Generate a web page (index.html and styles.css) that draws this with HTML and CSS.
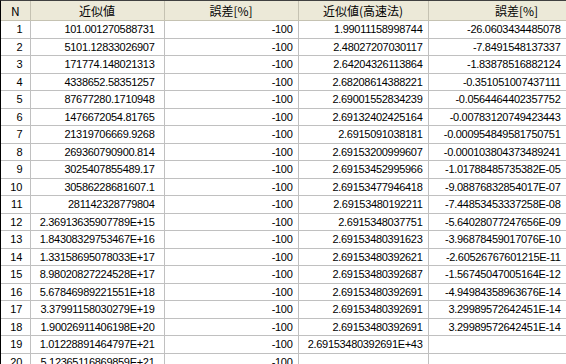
FILE: index.html
```html
<!DOCTYPE html>
<html lang="ja">
<head>
<meta charset="utf-8">
<title>近似値</title>
<link rel="stylesheet" href="styles.css">
</head>
<body>
<div class="grid">
<table class="sheet">
<colgroup>
<col class="c-n"><col class="c-a"><col class="c-b"><col class="c-c"><col class="c-d">
</colgroup>
<thead>
<tr><th>N</th><th>近似値</th><th>誤差[%]</th><th>近似値(高速法)</th><th>誤差[%]</th></tr>
</thead>
<tbody>
<tr><td>1</td><td class="wide">101.001270588731</td><td>-100</td><td>1.99011158998744</td><td>-26.0603434485078</td></tr>
<tr><td>2</td><td class="wide">5101.12833026907</td><td>-100</td><td>2.48027207030117</td><td>-7.8491548137337</td></tr>
<tr><td>3</td><td class="wide">171774.148021313</td><td>-100</td><td>2.64204326113864</td><td>-1.83878516882124</td></tr>
<tr><td>4</td><td class="wide">4338652.58351257</td><td>-100</td><td>2.68208614388221</td><td>-0.351051007437111</td></tr>
<tr><td>5</td><td class="wide">87677280.1710948</td><td>-100</td><td>2.69001552834239</td><td>-0.0564464402357752</td></tr>
<tr><td>6</td><td class="wide">1476672054.81765</td><td>-100</td><td>2.69132402425164</td><td>-0.00783120749423443</td></tr>
<tr><td>7</td><td class="wide">21319706669.9268</td><td>-100</td><td>2.6915091038181</td><td>-0.000954849581750751</td></tr>
<tr><td>8</td><td class="wide">269360790900.814</td><td>-100</td><td>2.69153200999607</td><td>-0.000103804373489241</td></tr>
<tr><td>9</td><td class="wide">3025407855489.17</td><td>-100</td><td>2.69153452995966</td><td>-1.01788485735382E-05</td></tr>
<tr><td>10</td><td class="wide">30586228681607.1</td><td>-100</td><td>2.69153477946418</td><td>-9.08876832854017E-07</td></tr>
<tr><td>11</td><td class="wide">281142328779804</td><td>-100</td><td>2.69153480192211</td><td>-7.44853453337258E-08</td></tr>
<tr><td>12</td><td class="wide">2.36913635907789E+15</td><td>-100</td><td>2.6915348037751</td><td>-5.64028077247656E-09</td></tr>
<tr><td>13</td><td class="wide">1.84308329753467E+16</td><td>-100</td><td>2.69153480391623</td><td>-3.96878459017076E-10</td></tr>
<tr><td>14</td><td class="wide">1.33158695078033E+17</td><td>-100</td><td>2.69153480392621</td><td>-2.60526767601215E-11</td></tr>
<tr><td>15</td><td class="wide">8.98020827224528E+17</td><td>-100</td><td>2.69153480392687</td><td>-1.56745047005164E-12</td></tr>
<tr><td>16</td><td class="wide">5.67846989221551E+18</td><td>-100</td><td>2.69153480392691</td><td>-4.94984358963676E-14</td></tr>
<tr><td>17</td><td class="wide">3.37991158030279E+19</td><td>-100</td><td>2.69153480392691</td><td>3.29989572642451E-14</td></tr>
<tr><td>18</td><td class="wide">1.90026911406198E+20</td><td>-100</td><td>2.69153480392691</td><td>3.29989572642451E-14</td></tr>
<tr><td>19</td><td class="wide">1.01228891464797E+21</td><td>-100</td><td>2.69153480392691E+43</td><td></td></tr>
<tr><td>20</td><td class="wide">5.12365116869859E+21</td><td>-100</td><td></td><td></td></tr>
</tbody>
</table>
</div>
</body>
</html>
```
FILE: styles.css
```css
html, body {
  margin: 0;
  padding: 0;
  background: #ffffff;
}
.grid {
  width: 566px;
  height: 364px;
  overflow: hidden;
  border-left: 1px solid #000000;
  border-top: 1px solid #404040;
  box-sizing: border-box;
}
.sheet {
  border-collapse: collapse;
  table-layout: fixed;
  width: 604px;
  font-family: "Liberation Sans", "Noto Sans CJK JP", sans-serif;
  font-size: 11px;
  color: #000000;
}
.c-n { width: 29px; }
.c-a { width: 134px; }
.c-b { width: 134px; }
.c-c { width: 130px; }
.c-d { width: 177px; }
.sheet th {
  height: 19px;
  padding: 0;
  background: #ece9d8;
  font-weight: normal;
  font-size: 12px;
  font-family: "Noto Sans CJK JP", "Liberation Sans", sans-serif;
  text-align: center;
  border-right: 1px solid #c5c2b2;
  border-bottom: 1px solid #c5c2b2;
  white-space: nowrap;
  overflow: hidden;
  line-height: 19px;
}
.sheet td {
  height: 16.5px;
  padding: 0 5px 0 2px;
  text-align: right;
  border-right: 1px solid #c0c0c0;
  border-bottom: 1px solid #c0c0c0;
  white-space: nowrap;
  letter-spacing: -0.3px;
  line-height: 16px;
  overflow: visible;
}
.sheet td:first-child {
  padding-right: 7px;
  letter-spacing: 0;
}
.sheet td.wide {
  padding-right: 9px;
}
.sheet td:last-child {
  padding-right: 44px;
}
```
